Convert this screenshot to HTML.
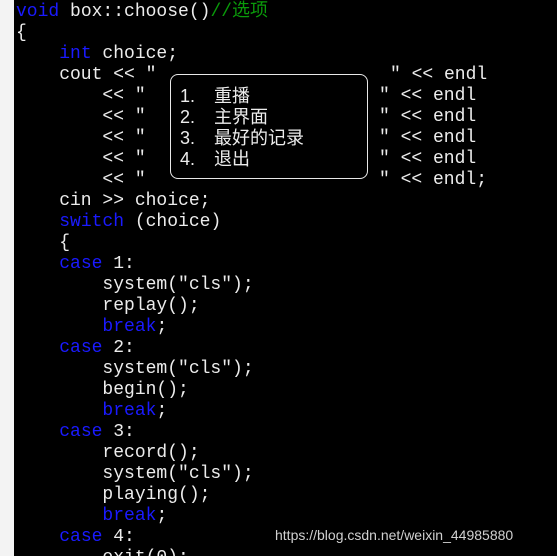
<!DOCTYPE html>
<html><head><meta charset="utf-8"><style>
html,body{margin:0;padding:0;width:557px;height:556px;overflow:hidden;}
body{background:#000;position:relative;font-family:"Liberation Mono","Noto Sans CJK SC",monospace;color:#ececec;}
.strip{position:absolute;left:0;top:0;width:14px;height:556px;background:#f3f3f3;}
.l{position:absolute;left:16px;height:21px;line-height:21px;font-size:18px;white-space:pre;}
.k{color:#1a1aff;}
.c{color:#0a9a0a;}
.box{position:absolute;left:170px;top:74px;width:196px;height:103px;border:1.5px solid #e8e8e8;border-radius:8px;}
.m{position:absolute;font-size:18px;line-height:21px;height:21px;font-family:"Liberation Sans","Noto Sans CJK SC",sans-serif;white-space:pre;}
.wm{position:absolute;left:275px;top:527px;font-family:"Liberation Sans",sans-serif;font-size:14px;color:#d0d0d0;}
</style></head><body>
<div class="strip"></div>
<div class="l" style="top:2px"><span class="k">void</span> box::choose()<span class="c">//选项</span></div>
<div class="l" style="top:23px">{</div>
<div class="l" style="top:44px">    <span class="k">int</span> choice;</div>
<div class="l" style="top:65px">    cout &lt;&lt; "</div>
<div class="l" style="top:65px;left:390px">" &lt;&lt; endl</div>
<div class="l" style="top:86px">        &lt;&lt; "</div>
<div class="l" style="top:107px">        &lt;&lt; "</div>
<div class="l" style="top:128px">        &lt;&lt; "</div>
<div class="l" style="top:149px">        &lt;&lt; "</div>
<div class="l" style="top:170px">        &lt;&lt; "</div>
<div class="l" style="top:86px;left:379px">" &lt;&lt; endl</div>
<div class="l" style="top:107px;left:379px">" &lt;&lt; endl</div>
<div class="l" style="top:128px;left:379px">" &lt;&lt; endl</div>
<div class="l" style="top:149px;left:379px">" &lt;&lt; endl</div>
<div class="l" style="top:170px;left:379px">" &lt;&lt; endl;</div>
<div class="box"></div>
<div class="m" style="top:86px;left:180px">1.</div><div class="m" style="top:86px;left:214px">重播</div>
<div class="m" style="top:107px;left:180px">2.</div><div class="m" style="top:107px;left:214px">主界面</div>
<div class="m" style="top:128px;left:180px">3.</div><div class="m" style="top:128px;left:214px">最好的记录</div>
<div class="m" style="top:149px;left:180px">4.</div><div class="m" style="top:149px;left:214px">退出</div>
<div class="l" style="top:191px">    cin &gt;&gt; choice;</div>
<div class="l" style="top:212px">    <span class="k">switch</span> (choice)</div>
<div class="l" style="top:233px">    {</div>
<div class="l" style="top:254px">    <span class="k">case</span> 1:</div>
<div class="l" style="top:275px">        system("cls");</div>
<div class="l" style="top:296px">        replay();</div>
<div class="l" style="top:317px">        <span class="k">break</span>;</div>
<div class="l" style="top:338px">    <span class="k">case</span> 2:</div>
<div class="l" style="top:359px">        system("cls");</div>
<div class="l" style="top:380px">        begin();</div>
<div class="l" style="top:401px">        <span class="k">break</span>;</div>
<div class="l" style="top:422px">    <span class="k">case</span> 3:</div>
<div class="l" style="top:443px">        record();</div>
<div class="l" style="top:464px">        system("cls");</div>
<div class="l" style="top:485px">        playing();</div>
<div class="l" style="top:506px">        <span class="k">break</span>;</div>
<div class="l" style="top:527px">    <span class="k">case</span> 4:</div>
<div class="l" style="top:548px">        exit(0);</div>
<div class="wm">https://blog.csdn.net/weixin_44985880</div>
</body></html>
